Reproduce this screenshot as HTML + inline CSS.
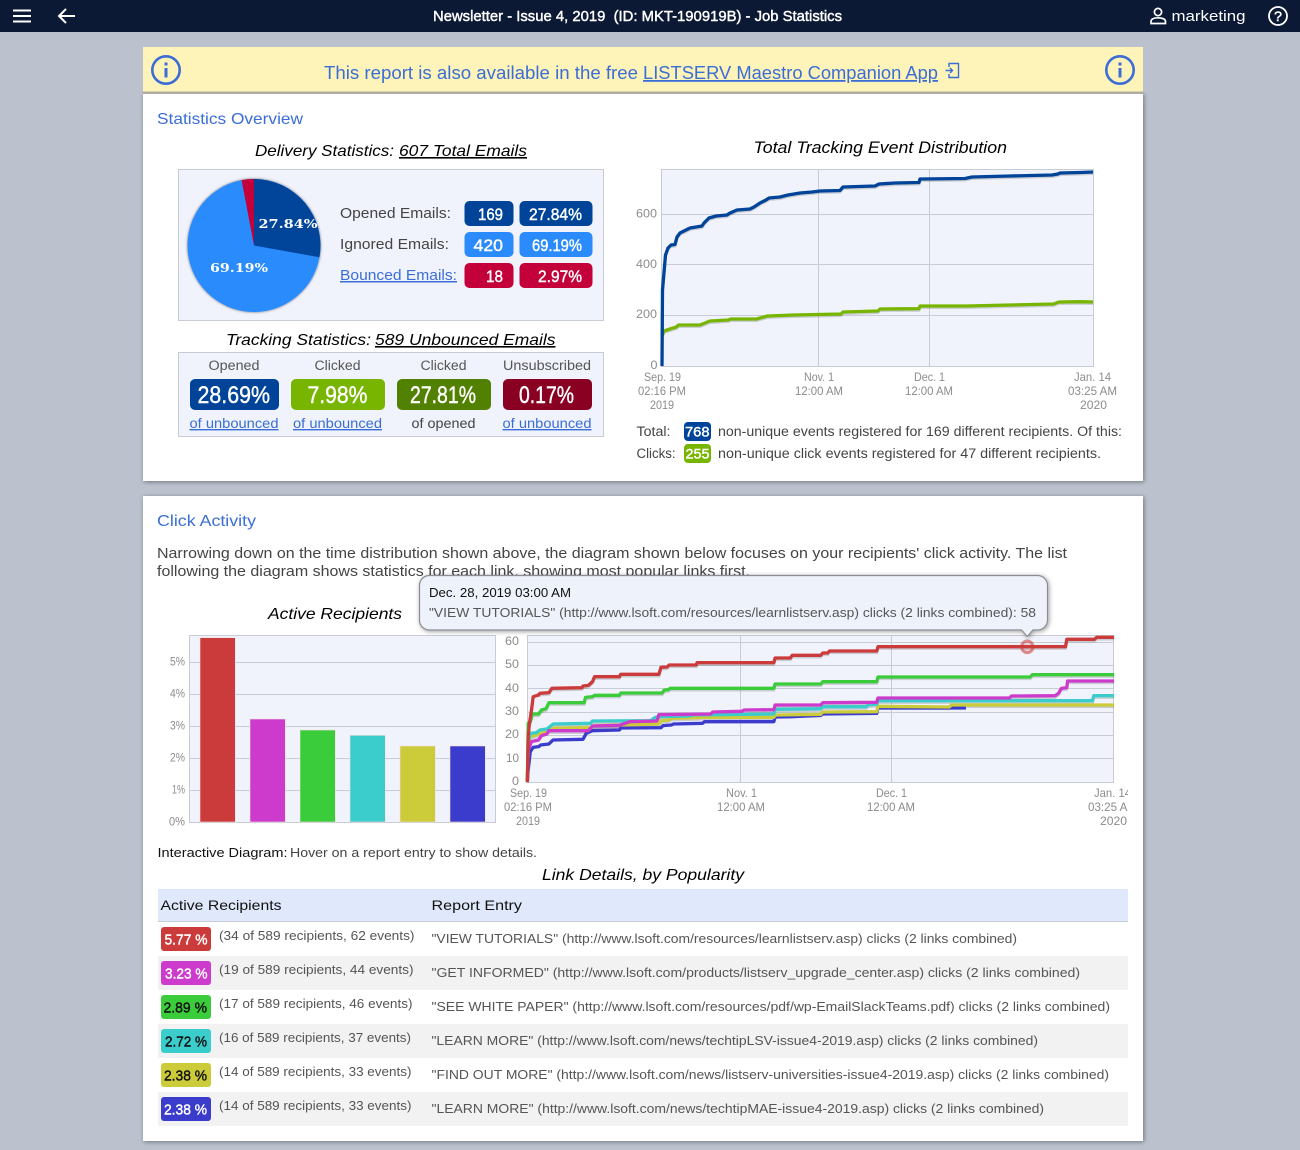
<!DOCTYPE html>
<html lang="en"><head><meta charset="utf-8"><title>Job Statistics</title>
<style>
html,body{margin:0;padding:0;background:#bbc2ce;width:1300px;height:1150px;overflow:hidden}
svg{display:block}
text{font-family:"Liberation Sans",sans-serif;fill:#444;font-size:13px;white-space:pre}
.m{stroke:currentColor;stroke-width:.42px}
.w{fill:#fff;color:#fff}
.i{font-style:italic;fill:#000;font-size:16px}
.u{text-decoration:underline}
.l{fill:#3a6ed6}
.t{fill:#3a6ed6;font-size:16px}
.a{fill:#8c8c8c;font-size:12px}
.g{stroke:#c8ccd6;stroke-width:1;fill:none}
.p{fill:none;stroke-width:3.3;stroke-linejoin:round;vector-effect:non-scaling-stroke}
.s{fill:none;stroke:rgba(0,0,0,.16);stroke-width:3;vector-effect:non-scaling-stroke}
</style></head>
<body>
<svg width="1300" height="1150" viewBox="0 0 1300 1150" xmlns="http://www.w3.org/2000/svg">
<defs>
<filter id="sh" x="-5%" y="-5%" width="110%" height="110%"><feDropShadow dx="1" dy="1" stdDeviation="2.5" flood-color="#000" flood-opacity=".4"/></filter>
<filter id="ps" x="-10%" y="-10%" width="120%" height="120%"><feDropShadow dx="0" dy="0" stdDeviation="1.2" flood-color="#000" flood-opacity=".6"/></filter>
<clipPath id="cc"><rect x="400" y="780" width="728" height="60"/></clipPath>
</defs>
<rect width="1300" height="1150" fill="#bbc2ce"/>

<!-- top bar -->
<rect width="1300" height="32" fill="#0c1935"/>
<path d="M13 10.5H31M13 16H31M13 21.5H31" stroke="#fff" stroke-width="2" fill="none"/>
<path d="M75 16H59M66 9L59 16L66 23" stroke="#fff" stroke-width="2" fill="none"/>
<text x="433" y="21" class="w m" style="font-size:14.5px" textLength="409" lengthAdjust="spacingAndGlyphs">Newsletter - Issue 4, 2019  (ID: MKT-190919B) - Job Statistics</text>
<circle cx="1158" cy="12" r="3.6" fill="none" stroke="#fff" stroke-width="1.7"/>
<path d="M1151 23.5V21.5C1151 19 1154 17.8 1158 17.8C1162 17.8 1165.5 19 1165.5 21.5V23.5Z" fill="none" stroke="#fff" stroke-width="1.7"/>
<text x="1171.5" y="21" class="w" style="font-size:15px" textLength="74" lengthAdjust="spacingAndGlyphs">marketing</text>
<circle cx="1278" cy="16" r="9" fill="none" stroke="#fff" stroke-width="1.8"/>
<text x="1274" y="21" class="w m" style="font-size:14px" textLength="8" lengthAdjust="spacingAndGlyphs">?</text>

<!-- card 1 -->
<rect x="143" y="93" width="1000" height="388" fill="#fff" filter="url(#sh)"/>
<!-- banner -->
<rect x="143" y="47" width="1000" height="46" fill="#fef3b8"/>
<rect x="143" y="91" width="1000" height="1" fill="#d8d2a4"/>
<rect x="143" y="92" width="1000" height="2" fill="#aeaca0"/>
<circle cx="166" cy="70" r="13.7" fill="none" stroke="#3a6ed6" stroke-width="2.6"/>
<rect x="164.5" y="68" width="3" height="9.5" fill="#3a6ed6"/><rect x="164.5" y="62.5" width="3" height="3" fill="#3a6ed6"/>
<circle cx="1120" cy="70" r="13.7" fill="none" stroke="#3a6ed6" stroke-width="2.6"/>
<rect x="1118.5" y="68" width="3" height="9.5" fill="#3a6ed6"/><rect x="1118.5" y="62.5" width="3" height="3" fill="#3a6ed6"/>
<text x="324" y="79" class="l" style="font-size:18px" textLength="314" lengthAdjust="spacingAndGlyphs">This report is also available in the free</text>
<text x="643" y="79" class="l u" style="font-size:18px" textLength="295" lengthAdjust="spacingAndGlyphs">LISTSERV Maestro Companion App</text>
<path d="M949 67V63.5H958.5V77.5H949V74M945.5 70.5H952M950 68L952.5 70.5L950 73" fill="none" stroke="#3a6ed6" stroke-width="1.4"/>

<text x="157" y="124" class="t" textLength="146" lengthAdjust="spacingAndGlyphs">Statistics Overview</text>
<text x="255" y="156" class="i" textLength="139" lengthAdjust="spacingAndGlyphs">Delivery Statistics:</text>
<text x="399" y="156" class="i u" textLength="128" lengthAdjust="spacingAndGlyphs">607 Total Emails</text>

<rect x="178.5" y="169.5" width="425" height="151" fill="#f0f3fb" stroke="#c8ccd4"/>
<g filter="url(#ps)">
<circle cx="254" cy="245.5" r="66.5" fill="#2b8bfd"/>
<path d="M254 245.5V179A66.5 66.5 0 0 1 319.4 257.3Z" fill="#00449a"/>
<path d="M254 245.5L241.6 180.1A66.5 66.5 0 0 1 254 179Z" fill="#c4003a"/>
</g>
<text x="258.5" y="228" class="w" style="font-family:'DejaVu Serif',serif;font-weight:700;font-size:12px" textLength="59" lengthAdjust="spacingAndGlyphs">27.84%</text>
<text x="210" y="272" class="w" style="font-family:'DejaVu Serif',serif;font-weight:700;font-size:12px" textLength="58" lengthAdjust="spacingAndGlyphs">69.19%</text>

<text x="340" y="218" style="font-size:15px" textLength="111" lengthAdjust="spacingAndGlyphs">Opened Emails:</text>
<text x="340" y="249" style="font-size:15px" textLength="109" lengthAdjust="spacingAndGlyphs">Ignored Emails:</text>
<text x="340" y="280" class="l u" style="font-size:15px" textLength="117" lengthAdjust="spacingAndGlyphs">Bounced Emails:</text>

<rect x="464.5" y="201" width="49" height="25" rx="5" fill="#00449a"/><rect x="519.5" y="201" width="73" height="25" rx="5" fill="#00449a"/>
<rect x="464.5" y="232" width="49" height="25" rx="5" fill="#2b8bfd"/><rect x="519.5" y="232" width="73" height="25" rx="5" fill="#2b8bfd"/>
<rect x="464.5" y="263" width="49" height="25" rx="5" fill="#c4003a"/><rect x="519.5" y="263" width="73" height="25" rx="5" fill="#c4003a"/>
<text x="478" y="220" class="w m" style="font-size:17px" textLength="25" lengthAdjust="spacingAndGlyphs">169</text>
<text x="529" y="220" class="w m" style="font-size:17px" textLength="53" lengthAdjust="spacingAndGlyphs">27.84%</text>
<text x="473.5" y="251" class="w m" style="font-size:17px" textLength="29.5" lengthAdjust="spacingAndGlyphs">420</text>
<text x="532" y="251" class="w m" style="font-size:17px" textLength="50" lengthAdjust="spacingAndGlyphs">69.19%</text>
<text x="486" y="282" class="w m" style="font-size:17px" textLength="17" lengthAdjust="spacingAndGlyphs">18</text>
<text x="538" y="282" class="w m" style="font-size:17px" textLength="44" lengthAdjust="spacingAndGlyphs">2.97%</text>

<text x="226" y="345" class="i" textLength="145" lengthAdjust="spacingAndGlyphs">Tracking Statistics:</text>
<text x="375" y="345" class="i u" textLength="180.5" lengthAdjust="spacingAndGlyphs">589 Unbounced Emails</text>
<rect x="178.5" y="352.5" width="425" height="84" fill="#f0f3fb" stroke="#c8ccd4"/>
<text x="208.5" y="370" style="font-size:13.5px;fill:#555" textLength="51" lengthAdjust="spacingAndGlyphs">Opened</text>
<text x="314.5" y="370" style="font-size:13.5px;fill:#555" textLength="46" lengthAdjust="spacingAndGlyphs">Clicked</text>
<text x="420.5" y="370" style="font-size:13.5px;fill:#555" textLength="46" lengthAdjust="spacingAndGlyphs">Clicked</text>
<text x="503" y="370" style="font-size:13.5px;fill:#555" textLength="88" lengthAdjust="spacingAndGlyphs">Unsubscribed</text>
<rect x="190" y="379" width="89" height="31" rx="5" fill="#00449a"/>
<rect x="291" y="379" width="94" height="31" rx="5" fill="#78b500"/>
<rect x="397" y="379" width="94" height="31" rx="5" fill="#528000"/>
<rect x="503" y="379" width="89" height="31" rx="5" fill="#8a0023"/>
<text x="197.5" y="403" class="w m" style="font-size:24px" textLength="72.5" lengthAdjust="spacingAndGlyphs">28.69%</text>
<text x="307.5" y="403" class="w m" style="font-size:24px" textLength="60" lengthAdjust="spacingAndGlyphs">7.98%</text>
<text x="410" y="403" class="w m" style="font-size:24px" textLength="66" lengthAdjust="spacingAndGlyphs">27.81%</text>
<text x="519" y="403" class="w m" style="font-size:24px" textLength="55" lengthAdjust="spacingAndGlyphs">0.17%</text>
<text x="189.5" y="428" class="l u" style="font-size:14px" textLength="89" lengthAdjust="spacingAndGlyphs">of unbounced</text>
<text x="293" y="428" class="l u" style="font-size:14px" textLength="89" lengthAdjust="spacingAndGlyphs">of unbounced</text>
<text x="411.5" y="428" style="font-size:14px" textLength="64" lengthAdjust="spacingAndGlyphs">of opened</text>
<text x="502.5" y="428" class="l u" style="font-size:14px" textLength="89" lengthAdjust="spacingAndGlyphs">of unbounced</text>

<!-- event chart -->
<text x="753.5" y="153" class="i" style="font-size:16.5px" textLength="253.5" lengthAdjust="spacingAndGlyphs">Total Tracking Event Distribution</text>
<rect x="661.5" y="169.5" width="432" height="197" fill="#f0f3fb" stroke="#c8ccd4"/>
<path class="g" d="M662 214.5H1093M662 264.5H1093M662 315.5H1093M818.5 170V366M929.5 170V366"/>
<text x="636" y="217.5" class="a" textLength="21" lengthAdjust="spacingAndGlyphs">600</text>
<text x="636" y="268" class="a" textLength="21" lengthAdjust="spacingAndGlyphs">400</text>
<text x="636" y="318" class="a" textLength="21" lengthAdjust="spacingAndGlyphs">200</text>
<text x="650.5" y="369" class="a" textLength="7" lengthAdjust="spacingAndGlyphs">0</text>
<text x="644" y="381" class="a" textLength="37" lengthAdjust="spacingAndGlyphs">Sep. 19</text>
<text x="638" y="395" class="a" textLength="48" lengthAdjust="spacingAndGlyphs">02:16 PM</text>
<text x="650" y="409" class="a" textLength="24" lengthAdjust="spacingAndGlyphs">2019</text>
<text x="804" y="381" class="a" textLength="30" lengthAdjust="spacingAndGlyphs">Nov. 1</text>
<text x="795" y="395" class="a" textLength="48" lengthAdjust="spacingAndGlyphs">12:00 AM</text>
<text x="914" y="381" class="a" textLength="31" lengthAdjust="spacingAndGlyphs">Dec. 1</text>
<text x="905" y="395" class="a" textLength="48" lengthAdjust="spacingAndGlyphs">12:00 AM</text>
<text x="1074" y="381" class="a" textLength="37" lengthAdjust="spacingAndGlyphs">Jan. 14</text>
<text x="1068" y="395" class="a" textLength="49" lengthAdjust="spacingAndGlyphs">03:25 AM</text>
<text x="1080" y="409" class="a" textLength="27" lengthAdjust="spacingAndGlyphs">2020</text>
<g transform="translate(0,1.5)">
<polyline class="s" points="662,365 662.5,290 665.5,255 668,248 671,245 675,244.5 677,237 680,233 684,231 690,228 696,227 702,226 704,223 709,218 716,216 727,215 730,213 737,210 750,209 754,207 760,203 766,200 769,198 780,197 788,195 800,193 812,192 820,191 840,190.5 843,187 875,186 879,184 895,183 919,182.5 920,179 965,178.5 972,177 1010,176 1052,175 1058,174 1060,173 1080,172.5 1093,172"/>
<polyline class="s" points="662,336 664,331 670,329 676.4,327 678.5,325 700,325 710,321 728.4,320 730.6,319 756.6,319 767.4,316 793.5,315 841,314 843,312 878,311 880,309 919,308.7 920,306 967,306 1010,305 1053.6,304 1059,302 1079.7,301.7 1093,302"/>
</g>
<polyline class="p" stroke="#78b500" points="662,336 664,331 670,329 676.4,327 678.5,325 700,325 710,321 728.4,320 730.6,319 756.6,319 767.4,316 793.5,315 841,314 843,312 878,311 880,309 919,308.7 920,306 967,306 1010,305 1053.6,304 1059,302 1079.7,301.7 1093,302"/>
<polyline class="p" stroke="#00449a" points="662,366 662.5,290 665.5,255 668,248 671,245 675,244.5 677,237 680,233 684,231 690,228 696,227 702,226 704,223 709,218 716,216 727,215 730,213 737,210 750,209 754,207 760,203 766,200 769,198 780,197 788,195 800,193 812,192 820,191 840,190.5 843,187 875,186 879,184 895,183 919,182.5 920,179 965,178.5 972,177 1010,176 1052,175 1058,174 1060,173 1080,172.5 1093,172"/>

<text x="636.5" y="436" style="font-size:13.5px" textLength="34" lengthAdjust="spacingAndGlyphs">Total:</text>
<rect x="684" y="422" width="27" height="19" rx="4" fill="#00449a"/>
<text x="685" y="436.5" class="w m" style="font-size:13.5px" textLength="24.5" lengthAdjust="spacingAndGlyphs">768</text>
<text x="718" y="436" style="font-size:13.5px" textLength="404" lengthAdjust="spacingAndGlyphs">non-unique events registered for 169 different recipients. Of this:</text>
<text x="636.5" y="458" style="font-size:13.5px" textLength="39" lengthAdjust="spacingAndGlyphs">Clicks:</text>
<rect x="684" y="444" width="27" height="19" rx="4" fill="#78b500"/>
<text x="685.5" y="458.5" class="w m" style="font-size:13.5px" textLength="24" lengthAdjust="spacingAndGlyphs">255</text>
<text x="718" y="458" style="font-size:13.5px" textLength="383" lengthAdjust="spacingAndGlyphs">non-unique click events registered for 47 different recipients.</text>

<!-- card 2 -->
<rect x="143" y="496" width="1000" height="645" fill="#fff" filter="url(#sh)"/>
<text x="157" y="526" class="t" textLength="99" lengthAdjust="spacingAndGlyphs">Click Activity</text>
<text x="157" y="558" style="font-size:14.5px" textLength="910" lengthAdjust="spacingAndGlyphs">Narrowing down on the time distribution shown above, the diagram shown below focuses on your recipients' click activity. The list</text>
<text x="157" y="576" style="font-size:14.5px" textLength="593" lengthAdjust="spacingAndGlyphs">following the diagram shows statistics for each link, showing most popular links first.</text>

<text x="268" y="619" class="i" textLength="134" lengthAdjust="spacingAndGlyphs">Active Recipients</text>

<!-- bars -->
<rect x="189.5" y="635.5" width="306" height="187" fill="#f0f3fb" stroke="#c8ccd4"/>
<path class="g" d="M190 662.5H495M190 694.5H495M190 726.5H495M190 758.5H495M190 790.5H495"/>
<g stroke="#f6dede" stroke-width=".6">
<rect x="200" y="637.7" width="35.3" height="184.3" fill="#cc3b3b"/>
<rect x="250" y="719" width="35.3" height="103" fill="#cc3bcc"/>
<rect x="300" y="730" width="35.3" height="92" fill="#3bcc3b"/>
<rect x="350" y="735.3" width="35.3" height="86.7" fill="#3bcccc"/>
<rect x="400" y="746" width="35.3" height="76" fill="#cccc3b"/>
<rect x="450" y="746" width="35.3" height="76" fill="#3b3bcc"/>
</g>
<text x="170" y="665.5" class="a" textLength="15" lengthAdjust="spacingAndGlyphs">5%</text>
<text x="170" y="697.5" class="a" textLength="15" lengthAdjust="spacingAndGlyphs">4%</text>
<text x="170" y="729.5" class="a" textLength="15" lengthAdjust="spacingAndGlyphs">3%</text>
<text x="170" y="761.5" class="a" textLength="15" lengthAdjust="spacingAndGlyphs">2%</text>
<text x="172" y="793.5" class="a" textLength="13" lengthAdjust="spacingAndGlyphs">1%</text>
<text x="169" y="825.5" class="a" textLength="16" lengthAdjust="spacingAndGlyphs">0%</text>

<!-- line chart -->
<rect x="527.5" y="635.5" width="586" height="147" fill="#f0f3fb" stroke="#c8ccd4"/>
<path class="g" d="M528 642.5H1113M528 665.5H1113M528 688.5H1113M528 712.5H1113M528 735.5H1113M528 758.5H1113M740.5 636V782M891.5 636V782"/>
<text x="505" y="645" class="a" textLength="14" lengthAdjust="spacingAndGlyphs">60</text>
<text x="505" y="668" class="a" textLength="14" lengthAdjust="spacingAndGlyphs">50</text>
<text x="505" y="692" class="a" textLength="14" lengthAdjust="spacingAndGlyphs">40</text>
<text x="505" y="715" class="a" textLength="14" lengthAdjust="spacingAndGlyphs">30</text>
<text x="505" y="738" class="a" textLength="14" lengthAdjust="spacingAndGlyphs">20</text>
<text x="506" y="762" class="a" textLength="13" lengthAdjust="spacingAndGlyphs">10</text>
<text x="512" y="785" class="a" textLength="7" lengthAdjust="spacingAndGlyphs">0</text>
<text x="510" y="797" class="a" textLength="37" lengthAdjust="spacingAndGlyphs">Sep. 19</text>
<text x="504" y="811" class="a" textLength="48" lengthAdjust="spacingAndGlyphs">02:16 PM</text>
<text x="516" y="825" class="a" textLength="24" lengthAdjust="spacingAndGlyphs">2019</text>
<text x="726" y="797" class="a" textLength="31" lengthAdjust="spacingAndGlyphs">Nov. 1</text>
<text x="717" y="811" class="a" textLength="48" lengthAdjust="spacingAndGlyphs">12:00 AM</text>
<text x="876" y="797" class="a" textLength="31" lengthAdjust="spacingAndGlyphs">Dec. 1</text>
<text x="867" y="811" class="a" textLength="48" lengthAdjust="spacingAndGlyphs">12:00 AM</text>
<g clip-path="url(#cc)">
<text x="1094" y="797" class="a" textLength="37" lengthAdjust="spacingAndGlyphs">Jan. 14</text>
<text x="1088" y="811" class="a" textLength="49" lengthAdjust="spacingAndGlyphs">03:25 AM</text>
<text x="1100" y="825" class="a" textLength="27" lengthAdjust="spacingAndGlyphs">2020</text>
</g>
<g transform="translate(495,570) scale(.41494,.33333)">
<g transform="translate(0,5)">
<polyline class="s" points="78,460 85,455 90,432 105,432 112,420 123,416 130,398 215,398 218,382 235,380 240,376 300,376 303,369 403,369 408,360 418,359 422,355 672,355 675,342 785,342 790,335 920,335 923,321 1290,321 1295,314 1492,314"/>
<polyline class="s" points="78,520 85,490 100,488 108,480 125,477 140,462 230,460 235,453 375,452 385,443 395,440 470,438 475,435 672,432 675,418 785,416 790,410 895,410 900,404 920,403 923,392 1440,392 1443,377 1492,377"/>
<polyline class="s" points="80,530 85,500 100,495 125,485 135,475 230,473 240,467 395,462 400,452 420,450 425,445 480,443 500,442 672,442 675,435 785,433 790,426 920,425 923,409 1095,411 1100,405 1492,405"/>
<polyline class="s" points="130,482 225,482 235,468 300,466 325,455 390,453 395,434 520,432 525,426 595,424 600,420 672,419 675,405 785,405 790,398 920,397 923,384 1240,384 1245,378 1350,377 1358,370 1365,355 1378,353 1380,333 1492,333"/>
<polyline class="s" points="105,375 108,370 130,368 137,355 210,353 212,348 225,346 235,335 240,320 300,320 303,313 395,313 400,292 415,291 420,285 485,285 487,278 672,278 675,264 712,264 716,256 785,256 790,249 802,249 806,243 920,243 923,230 1375,230 1378,208 1445,208 1450,202 1492,202"/>
</g>
<polyline class="p" stroke="#3b3bcc" points="78,635 80,600 85,545 92,532 105,530 110,525 130,522 140,510 212,508 220,490 235,482 300,480 303,474 400,473 405,467 425,465 430,462 500,460 505,455 672,455 675,441 715,440 785,436 790,432 920,430 923,414 1135,414"/>
<polyline class="p" stroke="#cccc3b" points="78,635 80,530 85,500 100,495 125,485 135,475 230,473 240,467 395,462 400,452 420,450 425,445 480,443 500,442 672,442 675,435 785,433 790,426 920,425 923,409 1095,411 1100,405 1492,405"/>
<polyline class="p" stroke="#3bcccc" points="78,635 80,520 85,490 100,488 108,480 125,477 140,462 230,460 235,453 375,452 385,443 395,440 470,438 475,435 672,432 675,418 785,416 790,410 895,410 900,404 920,403 923,392 1440,392 1443,377 1492,377"/>
<polyline class="p" stroke="#cc3bcc" points="78,635 80,540 88,515 105,510 112,497 125,492 130,482 225,482 235,468 300,466 325,455 390,453 395,434 520,432 525,426 595,424 600,420 672,419 675,405 785,405 790,398 920,397 923,384 1240,384 1245,378 1350,377 1358,370 1365,355 1378,353 1380,333 1492,333"/>
<polyline class="p" stroke="#3bcc3b" points="78,635 80,460 85,455 90,432 105,432 112,420 123,416 130,398 215,398 218,382 235,380 240,376 300,376 303,369 403,369 408,360 418,359 422,355 672,355 675,342 785,342 790,335 920,335 923,321 1290,321 1295,314 1492,314"/>
<polyline class="p" stroke="#cc3b3b" points="78,637 80,500 83,460 88,420 92,380 105,375 108,370 130,368 137,355 210,353 212,348 225,346 235,335 240,320 300,320 303,313 395,313 400,292 415,291 420,285 485,285 487,278 672,278 675,264 712,264 716,256 785,256 790,249 802,249 806,243 920,243 923,230 1375,230 1378,208 1445,208 1450,202 1492,202"/>
</g>
<circle cx="1027.3" cy="646.8" r="5.8" fill="rgba(204,59,59,.15)" stroke="#cc3b3b" stroke-opacity=".55" stroke-width="3"/>

<!-- tooltip -->
<path d="M429 575.5H1037.5A10 10 0 0 1 1047.5 585.5V620A10 10 0 0 1 1037.5 630H1033L1027.3 636.5L1021.5 630H429A10 10 0 0 1 419.5 620V585.5A10 10 0 0 1 429 575.5Z" fill="#eef2fb" stroke="#8a8d94" stroke-width="1.2" filter="url(#sh)"/>
<text x="429" y="597" style="font-size:13px;fill:#111" textLength="142" lengthAdjust="spacingAndGlyphs">Dec. 28, 2019 03:00 AM</text>
<text x="429" y="617" style="font-size:13px;fill:#555" textLength="607" lengthAdjust="spacingAndGlyphs">"VIEW TUTORIALS" (http://www.lsoft.com/resources/learnlistserv.asp) clicks (2 links combined): 58</text>

<text x="157.5" y="857" style="font-size:12.5px;fill:#111" textLength="130" lengthAdjust="spacingAndGlyphs">Interactive Diagram:</text>
<text x="290" y="857" style="font-size:12.5px" textLength="247" lengthAdjust="spacingAndGlyphs">Hover on a report entry to show details.</text>
<text x="542" y="880" class="i" textLength="202" lengthAdjust="spacingAndGlyphs">Link Details, by Popularity</text>

<!-- table -->
<rect x="158" y="889" width="970" height="32" fill="#dfe9fb"/>
<rect x="158" y="921" width="970" height="1" fill="#c8ccd4"/>
<text x="160.5" y="910" style="font-size:14px;fill:#111" textLength="121" lengthAdjust="spacingAndGlyphs">Active Recipients</text>
<text x="431.5" y="910" style="font-size:14px;fill:#111" textLength="90.5" lengthAdjust="spacingAndGlyphs">Report Entry</text>
<rect x="158" y="956" width="970" height="34" fill="#f2f2f2"/>
<rect x="158" y="1024" width="970" height="34" fill="#f2f2f2"/>
<rect x="158" y="1092" width="970" height="34" fill="#f2f2f2"/>

<rect x="161" y="927" width="50" height="24" rx="3" fill="#cc3b3b"/>
<rect x="161" y="961" width="50" height="24" rx="3" fill="#cc3bcc"/>
<rect x="161" y="995" width="50" height="24" rx="3" fill="#3bcc3b"/>
<rect x="161" y="1029" width="50" height="24" rx="3" fill="#3bcccc"/>
<rect x="161" y="1063" width="50" height="24" rx="3" fill="#cccc3b"/>
<rect x="161" y="1097" width="50" height="24" rx="3" fill="#3b3bcc"/>
<text x="164.5" y="944.5" class="w m" style="font-size:15px" textLength="43" lengthAdjust="spacingAndGlyphs">5.77 %</text>
<text x="165" y="978.5" class="w m" style="font-size:15px" textLength="42.5" lengthAdjust="spacingAndGlyphs">3.23 %</text>
<text x="163.5" y="1012.5" class="m" style="font-size:15px;fill:#111;color:#111" textLength="43.5" lengthAdjust="spacingAndGlyphs">2.89 %</text>
<text x="165" y="1046.5" class="m" style="font-size:15px;fill:#111;color:#111" textLength="42" lengthAdjust="spacingAndGlyphs">2.72 %</text>
<text x="164" y="1080.5" class="m" style="font-size:15px;fill:#111;color:#111" textLength="43" lengthAdjust="spacingAndGlyphs">2.38 %</text>
<text x="164" y="1114.5" class="w m" style="font-size:15px" textLength="43" lengthAdjust="spacingAndGlyphs">2.38 %</text>

<g>
<text x="219" y="940" style="fill:#555" textLength="195.5" lengthAdjust="spacingAndGlyphs">(34 of 589 recipients, 62 events)</text>
<text x="219" y="974" style="fill:#555" textLength="194.5" lengthAdjust="spacingAndGlyphs">(19 of 589 recipients, 44 events)</text>
<text x="219" y="1008" style="fill:#555" textLength="193.5" lengthAdjust="spacingAndGlyphs">(17 of 589 recipients, 46 events)</text>
<text x="219" y="1042" style="fill:#555" textLength="192" lengthAdjust="spacingAndGlyphs">(16 of 589 recipients, 37 events)</text>
<text x="219" y="1076" style="fill:#555" textLength="192.5" lengthAdjust="spacingAndGlyphs">(14 of 589 recipients, 33 events)</text>
<text x="219" y="1110" style="fill:#555" textLength="192.5" lengthAdjust="spacingAndGlyphs">(14 of 589 recipients, 33 events)</text>
</g>
<g>
<text x="431.5" y="943" style="fill:#555" textLength="585.5" lengthAdjust="spacingAndGlyphs">"VIEW TUTORIALS" (http://www.lsoft.com/resources/learnlistserv.asp) clicks (2 links combined)</text>
<text x="431.5" y="977" style="fill:#555" textLength="648.5" lengthAdjust="spacingAndGlyphs">"GET INFORMED" (http://www.lsoft.com/products/listserv_upgrade_center.asp) clicks (2 links combined)</text>
<text x="431.5" y="1011" style="fill:#555" textLength="678.5" lengthAdjust="spacingAndGlyphs">"SEE WHITE PAPER" (http://www.lsoft.com/resources/pdf/wp-EmailSlackTeams.pdf) clicks (2 links combined)</text>
<text x="431.5" y="1045" style="fill:#555" textLength="606.5" lengthAdjust="spacingAndGlyphs">"LEARN MORE" (http://www.lsoft.com/news/techtipLSV-issue4-2019.asp) clicks (2 links combined)</text>
<text x="431.5" y="1079" style="fill:#555" textLength="677.5" lengthAdjust="spacingAndGlyphs">"FIND OUT MORE" (http://www.lsoft.com/news/listserv-universities-issue4-2019.asp) clicks (2 links combined)</text>
<text x="431.5" y="1113" style="fill:#555" textLength="612.5" lengthAdjust="spacingAndGlyphs">"LEARN MORE" (http://www.lsoft.com/news/techtipMAE-issue4-2019.asp) clicks (2 links combined)</text>
</g>
</svg>
</body></html>
